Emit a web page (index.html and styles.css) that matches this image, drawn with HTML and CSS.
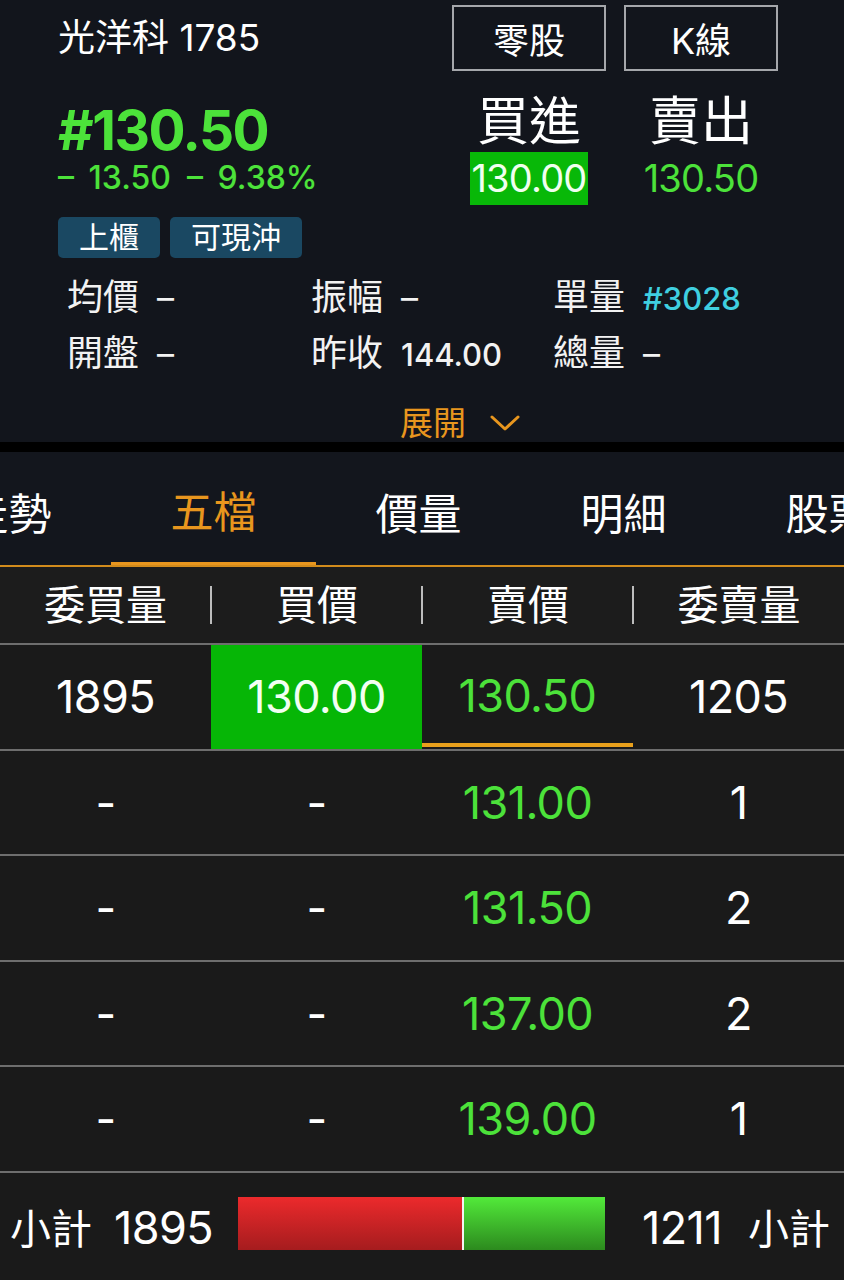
FILE: index.html
```html
<!DOCTYPE html>
<html lang="zh-Hant">
<head>
<meta charset="utf-8">
<title>光洋科 1785 五檔</title>
<link rel="stylesheet" href="styles.css">
</head>
<body>
<div class="page">
  <section class="top">
    <div class="head">
      <div class="info">
        <div class="name">光洋科 1785</div>
        <div class="price">#130.50</div>
        <div class="change"><span>– 13.50</span><span>– 9.38%</span></div>
      </div>
      <div class="actions">
        <div class="btn">零股</div>
        <div class="btn">K線</div>
        <div class="quote">
          <div class="q-label">買進</div>
          <div class="q-val q-buy">130.00</div>
        </div>
        <div class="quote">
          <div class="q-label">賣出</div>
          <div class="q-val q-sell">130.50</div>
        </div>
      </div>
    </div>
    <div class="tags">
      <span class="tag">上櫃</span>
      <span class="tag">可現沖</span>
    </div>
    <div class="stats">
      <div class="stat"><span class="s-label">均價</span><span class="s-val">–</span></div>
      <div class="stat"><span class="s-label">振幅</span><span class="s-val">–</span></div>
      <div class="stat"><span class="s-label">單量</span><span class="s-val cyan">#3028</span></div>
      <div class="stat"><span class="s-label">開盤</span><span class="s-val">–</span></div>
      <div class="stat"><span class="s-label">昨收</span><span class="s-val num">144.00</span></div>
      <div class="stat"><span class="s-label">總量</span><span class="s-val">–</span></div>
    </div>
    <div class="expand">
      <span>展開</span>
      <svg class="chev" width="30" height="18" viewBox="0 0 30 18"><polyline points="2,3 15,15 28,3" fill="none" stroke="#e8961e" stroke-width="3" stroke-linecap="round" stroke-linejoin="round"/></svg>
    </div>
  </section>
  <div class="band"></div>
  <nav class="tabs">
    <div class="tabstrip">
      <div class="tab">走勢</div>
      <div class="tab active">五檔</div>
      <div class="tab">價量</div>
      <div class="tab">明細</div>
      <div class="tab">股票</div>
    </div>
  </nav>
  <div class="thead">
    <div class="th">委買量</div>
    <div class="th sep">買價</div>
    <div class="th sep">賣價</div>
    <div class="th sep">委賣量</div>
  </div>
  <div class="row">
    <div class="cell">1895</div>
    <div class="cell bid-hl">130.00</div>
    <div class="cell ask best">130.50</div>
    <div class="cell">1205</div>
  </div>
  <div class="row">
    <div class="cell">-</div>
    <div class="cell">-</div>
    <div class="cell ask">131.00</div>
    <div class="cell">1</div>
  </div>
  <div class="row">
    <div class="cell">-</div>
    <div class="cell">-</div>
    <div class="cell ask">131.50</div>
    <div class="cell">2</div>
  </div>
  <div class="row">
    <div class="cell">-</div>
    <div class="cell">-</div>
    <div class="cell ask">137.00</div>
    <div class="cell">2</div>
  </div>
  <div class="row">
    <div class="cell">-</div>
    <div class="cell">-</div>
    <div class="cell ask">139.00</div>
    <div class="cell">1</div>
  </div>
  <div class="summary">
    <div class="sum-left"><span class="cjk">小計</span><span>1895</span></div>
    <div class="bar">
      <div class="bar-red" style="width:61%"></div>
      <div class="bar-green"></div>
    </div>
    <div class="sum-right"><span>1211</span><span class="cjk">小計</span></div>
  </div>
</div>
</body>
</html>
```
FILE: styles.css
```css
html, body {
  margin: 0;
  padding: 0;
  background: #1a1a1a;
}
body {
  width: 844px;
  height: 1280px;
  overflow: hidden;
  font-family: Inter, "Noto Sans CJK TC", sans-serif;
  color: #fff;
}
.page {
  width: 844px;
}
.top {
  background: #12151c;
  height: 442px;
  box-sizing: border-box;
  padding-top: 5px;
}
.head {
  display: flex;
  align-items: flex-start;
}
.info {
  padding-left: 58px;
}
.name {
  font-size: 37px;
  line-height: 66px;
  color: #fff;
}
.price {
  font-size: 55px;
  font-weight: 700;
  line-height: 52px;
  margin-top: 33px;
  color: #4ce23a;
  letter-spacing: -1.5px;
}
.change {
  display: flex;
  gap: 16px;
  font-size: 32px;
  line-height: 30px;
  margin-top: 7px;
  color: #4ce23a;
  font-weight: 500;
  word-spacing: 6px;
}
.actions {
  margin-left: auto;
  margin-right: 66px;
  display: grid;
  grid-template-columns: 154px 154px;
  column-gap: 18px;
}
.btn {
  height: 66px;
  border: 2px solid #a5a7ab;
  box-sizing: border-box;
  font-size: 36px;
  display: flex;
  align-items: center;
  justify-content: center;
  color: #fff;
}
.quote {
  display: flex;
  flex-direction: column;
  align-items: center;
  margin-top: 23px;
}
.q-label {
  font-size: 52px;
  line-height: 56px;
}
.q-val {
  font-size: 38px;
  line-height: 53px;
  margin-top: 2px;
  letter-spacing: -0.8px;
}
.q-buy {
  background: #08b808;
  color: #f0fff0;
  padding: 0 1px;
}
.q-sell {
  color: #4ce23a;
}
.tags {
  display: flex;
  gap: 10px;
  padding-left: 58px;
  margin-top: 12px;
}
.tag {
  height: 41px;
  padding: 0 21px;
  background: #1a4862;
  border-radius: 5px;
  font-size: 30px;
  line-height: 41px;
  color: #fff;
}
.stats {
  display: grid;
  grid-template-columns: 244px 242px auto;
  padding-left: 67px;
  margin-top: 12px;
}
.stat {
  display: flex;
  align-items: baseline;
  gap: 18px;
  line-height: 55px;
}
.s-label {
  font-size: 36px;
  color: #f2f2f2;
}
.s-val {
  font-size: 34px;
  color: #f2f2f2;
}
.s-val.num {
  font-size: 31px;
  font-weight: 500;
}
.s-val.cyan {
  font-size: 31px;
  font-weight: 500;
  color: #3fcfe0;
}
.expand {
  display: flex;
  align-items: center;
  gap: 24px;
  padding-left: 400px;
  margin-top: 20px;
  color: #e8961e;
  font-size: 33px;
  line-height: 42px;
}
.chev {
  display: block;
}
.band {
  height: 10px;
  background: #000;
}
.tabs {
  background: #13161d;
  height: 115px;
  overflow: hidden;
  border-bottom: 2px solid #d18b1c;
  box-sizing: border-box;
}
.tabstrip {
  display: flex;
  margin-left: -94px;
  height: 100%;
}
.tab {
  flex: 0 0 205px;
  display: flex;
  align-items: center;
  justify-content: center;
  font-size: 43px;
  color: #fff;
  box-sizing: border-box;
  padding-top: 4px;
}
.tab.active {
  color: #e8961e;
  border-bottom: 3px solid #e8961e;
}
.thead {
  display: grid;
  grid-template-columns: repeat(4, 1fr);
  height: 76px;
  background: #1c1c1c;
  align-items: center;
}
.th {
  font-size: 41px;
  line-height: 38px;
  height: 38px;
  text-align: center;
  color: #fff;
}
.th.sep {
  border-left: 2px solid #bdbdbd;
  margin-left: -1px;
}
.row {
  display: grid;
  grid-template-columns: repeat(4, 1fr);
  height: 105.5px;
  border-top: 2px solid #6e6e6e;
  box-sizing: border-box;
  background: #1a1a1a;
}
.cell {
  display: flex;
  align-items: center;
  justify-content: center;
  font-size: 45px;
  color: #fff;
  letter-spacing: -0.6px;
}
.cell.bid-hl {
  background: #06b606;
  color: #f2fff2;
}
.cell.ask {
  color: #4ce23a;
}
.cell.ask.best {
  box-shadow: inset 0 -4px 0 #e8a01c;
  margin-bottom: 2px;
}
.summary {
  height: 109.5px;
  border-top: 2px solid #6e6e6e;
  box-sizing: border-box;
  display: flex;
  align-items: center;
  padding: 0 14px 0 10px;
  background: #1a1a1a;
  font-size: 45px;
  letter-spacing: -0.6px;
}
.cjk {
  font-size: 41px;
  letter-spacing: 0;
}
.sum-left, .sum-right {
  display: flex;
  gap: 22px;
  align-items: baseline;
}
.sum-right {
  margin-left: auto;
  gap: 26px;
}
.bar {
  display: flex;
  width: 367px;
  height: 53px;
  margin-left: 25px;
  margin-top: -6px;
}
.bar-red {
  background: linear-gradient(#ec2a2c, #a51c1e);
}
.bar-green {
  flex: 1;
  background: linear-gradient(#52ea3a, #2c8a1e);
  border-left: 2px solid #f4f4f4;
}
```
